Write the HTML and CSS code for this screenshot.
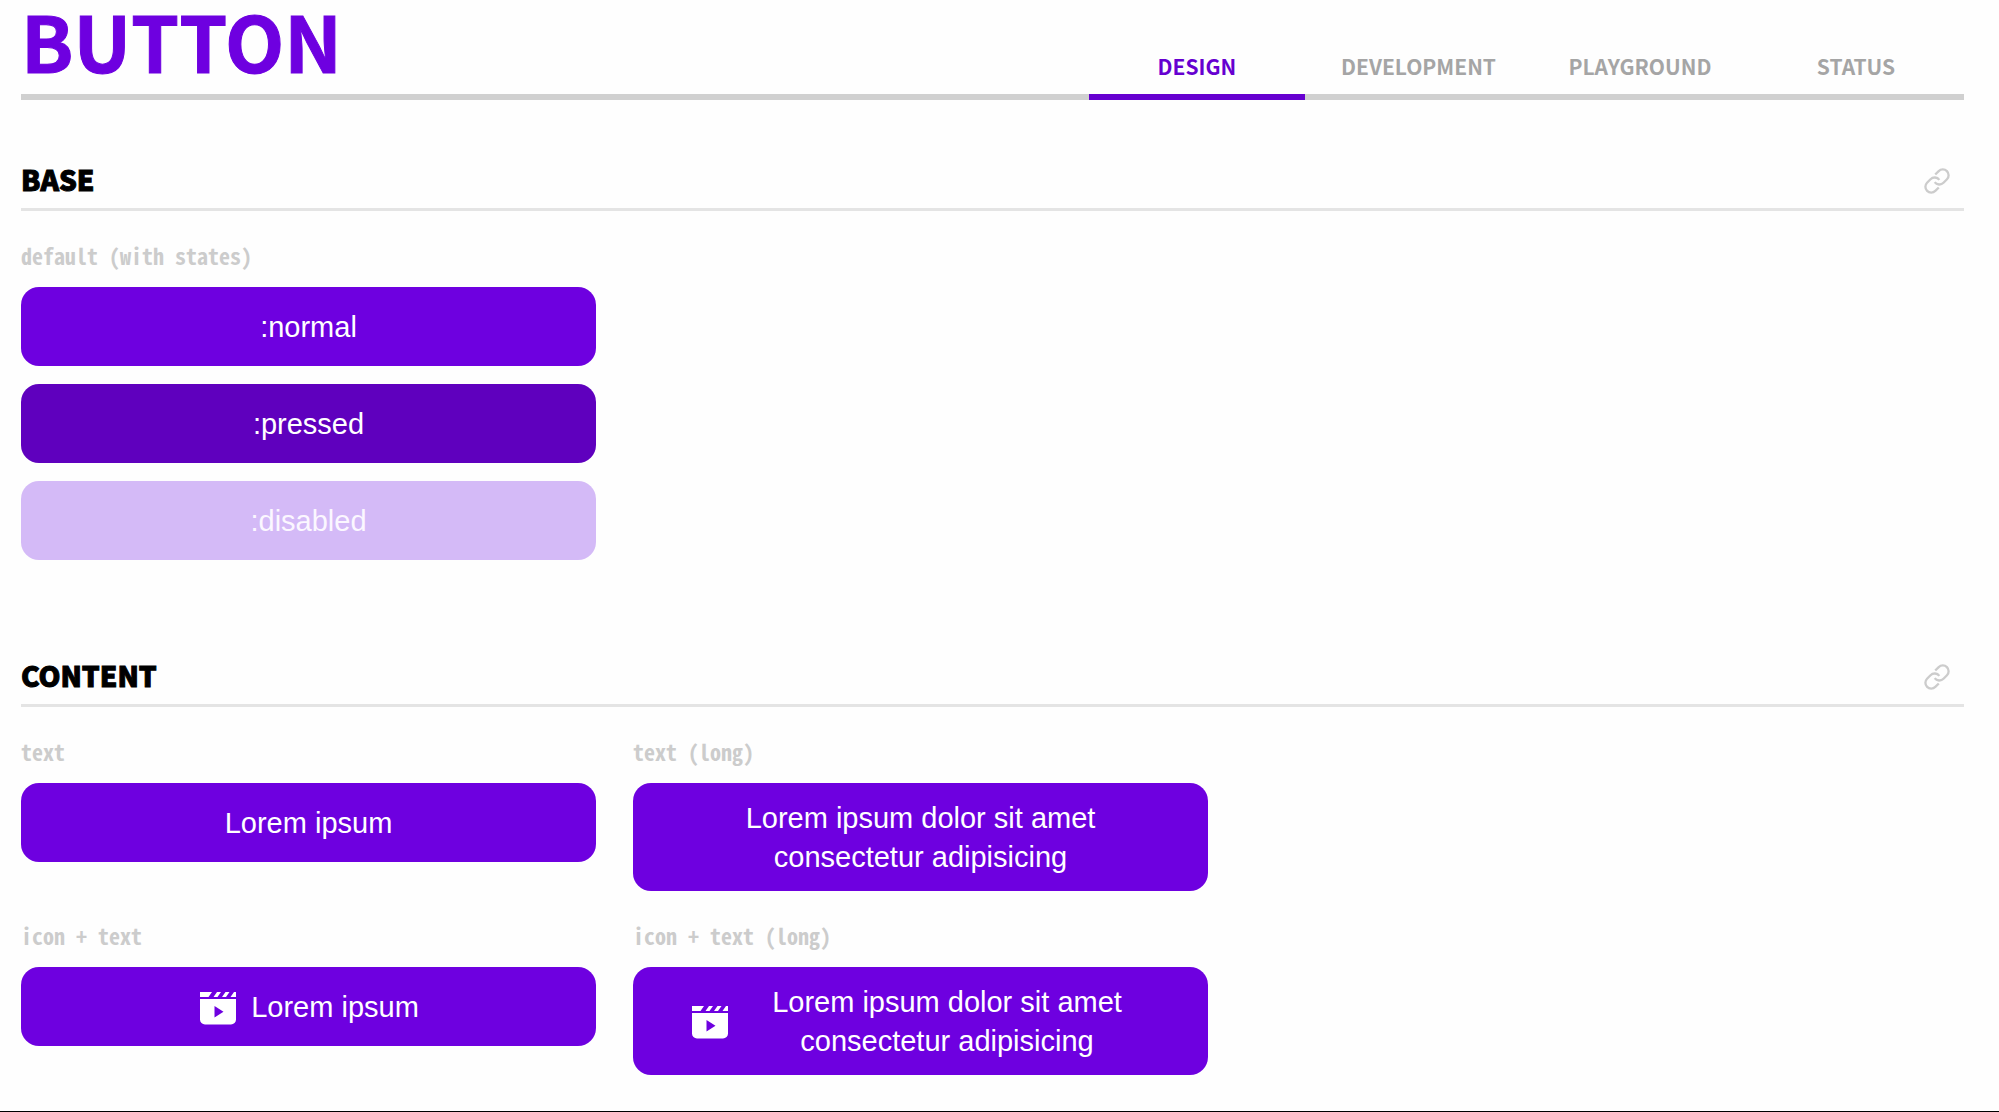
FILE: index.html
```html
<!DOCTYPE html>
<html lang="en">
<head>
<meta charset="utf-8">
<meta name="viewport" content="width=device-width, initial-scale=1">
<title>Button</title>
<link rel="stylesheet" href="styles.css">
</head>
<body>
<svg class="sprite" aria-hidden="true">
  <symbol id="link" viewBox="0 0 24 24">
    <path d="M10 13a5 5 0 0 0 7.54.54l3-3a5 5 0 0 0-7.07-7.07l-3 3M14 11a5 5 0 0 0-7.54-.54l-3 3a5 5 0 0 0 7.07 7.07l3-3" fill="none" stroke="currentColor" stroke-width="2"/>
  </symbol>
  <symbol id="clapper" viewBox="0 0 40 40">
    <path fill="currentColor" fill-rule="evenodd" d="M2 4h12l-3.500 5H2zM19 4h4l-3.500 5h-4zM27.500 4h4L28 9h-4zM36 4h2v5h-5.500zM2 11h36v20.500a5 5 0 0 1-5 5H7a5 5 0 0 1-5-5zM16.500 18v11.500l9-5.750z"/>
  </symbol>
</svg>
<header class="header">
  <h1 class="title">BUTTON</h1>
  <nav class="tabs">
    <a class="tab tab-active" href="#design" aria-current="page">DESIGN</a>
    <a class="tab" href="#development">DEVELOPMENT</a>
    <a class="tab" href="#playground">PLAYGROUND</a>
    <a class="tab" href="#status">STATUS</a>
  </nav>
</header>
<main>
  <section class="section" id="base">
    <div class="section-head">
      <h2 class="section-title">BASE</h2>
      <a class="anchor" href="#base" aria-label="Link to Base"><svg class="anchor-icon"><use href="#link"/></svg></a>
    </div>
    <div class="examples">
      <div class="example">
        <p class="caption">default (with states)</p>
        <button class="button" type="button">:normal</button>
        <button class="button button-pressed" type="button">:pressed</button>
        <button class="button" type="button" disabled>:disabled</button>
      </div>
    </div>
  </section>
  <section class="section" id="content">
    <div class="section-head">
      <h2 class="section-title">CONTENT</h2>
      <a class="anchor" href="#content" aria-label="Link to Content"><svg class="anchor-icon"><use href="#link"/></svg></a>
    </div>
    <div class="examples">
      <div class="example">
        <p class="caption">text</p>
        <button class="button" type="button">Lorem ipsum</button>
      </div>
      <div class="example">
        <p class="caption">text (long)</p>
        <button class="button" type="button">Lorem ipsum dolor sit amet consectetur adipisicing</button>
      </div>
      <div class="example">
        <p class="caption">icon + text</p>
        <button class="button" type="button"><svg class="button-icon"><use href="#clapper"/></svg><span>Lorem ipsum</span></button>
      </div>
      <div class="example">
        <p class="caption">icon + text (long)</p>
        <button class="button" type="button"><svg class="button-icon"><use href="#clapper"/></svg><span>Lorem ipsum dolor sit amet consectetur adipisicing</span></button>
      </div>
    </div>
  </section>
</main>
</body>
</html>
```
FILE: styles.css
```css
* {
  box-sizing: border-box;
}

body {
  margin: 0;
  min-height: 100vh;
  padding: 0 35px 0 21px;
  background: #fefefe;
  border-bottom: 1px solid #000;
  font-family: "Noto Sans CJK SC", "Open Sans", sans-serif;
}

h1,
h2,
p {
  margin: 0;
}

.sprite {
  display: none;
}

.header {
  display: flex;
  justify-content: space-between;
  align-items: flex-end;
  height: 100px;
  border-bottom: 6px solid #d0d0d0;
}

.title {
  padding-bottom: 16px;
  color: #6e00e0;
  font-size: 77px;
  line-height: 76px;
  font-weight: 700;
  -webkit-text-stroke: 1px currentColor;
}

.tabs {
  display: flex;
  margin-bottom: -6px;
}

.tab {
  min-width: 216px;
  padding: 0 36px 12px;
  border-bottom: 6px solid transparent;
  color: #a5a5a5;
  font-size: 21px;
  line-height: 32px;
  font-weight: 700;
  text-align: center;
  text-decoration: none;
}

.tab-active {
  color: #6600d0;
  border-color: #6600d0;
}

.section {
  padding: 60px 0 36px;
}

.section-head {
  display: flex;
  justify-content: space-between;
  align-items: center;
  height: 51px;
  padding: 0 13px 6px 0;
  border-bottom: 3px solid #e4e4e4;
}

.section-title {
  padding-bottom: 4px;
  font-size: 28px;
  line-height: 36px;
  font-weight: 900;
  -webkit-text-stroke: 1px currentColor;
}

.anchor {
  display: flex;
  color: #ccc;
}

.anchor-icon {
  width: 28px;
  height: 28px;
}

.examples {
  display: grid;
  grid-template-columns: repeat(auto-fill, 575px);
  gap: 30px 37px;
  max-width: 1300px;
  padding-top: 30px;
}

.example {
  display: flex;
  flex-direction: column;
  gap: 18px;
}

.caption {
  color: #ccc;
  font-family: "Noto Sans Mono CJK SC", "Liberation Mono", monospace;
  font-size: 22px;
  line-height: 28px;
  font-weight: 700;
}

.button {
  display: flex;
  justify-content: center;
  align-items: center;
  gap: 13px;
  min-height: 79px;
  padding: 16px 57px 14px;
  border: 0;
  border-radius: 18px;
  background: #6e00e0;
  color: #fff;
  font-family: "Liberation Sans", Arial, sans-serif;
  font-size: 29px;
  line-height: 39px;
  text-align: center;
}

.button-pressed {
  background: #5f00be;
}

.button:disabled {
  background: #d4baf7;
  color: #fbf7ff;
}

.button-icon {
  flex: none;
  width: 40px;
  height: 40px;
}
```
